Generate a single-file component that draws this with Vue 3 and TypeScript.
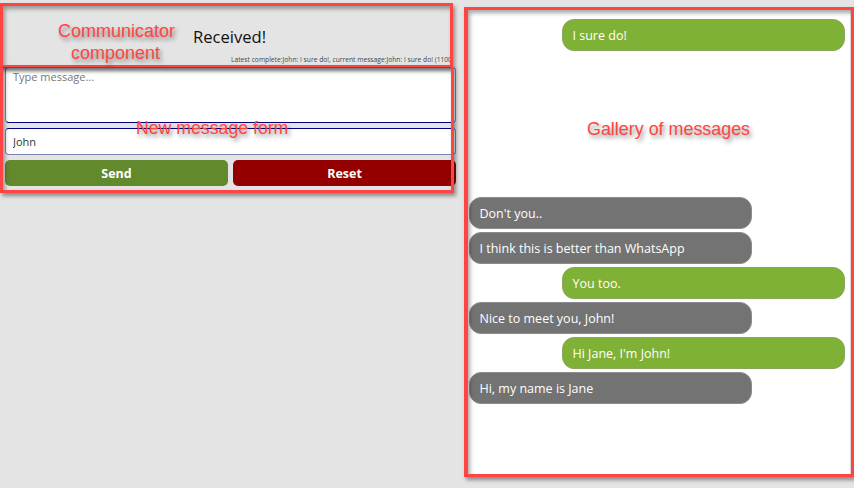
<script setup lang="ts">
interface Msg { text: string; mine: boolean }
const messages: Msg[] = [
  { text: "Don't you..", mine: false },
  { text: 'I think this is better than WhatsApp', mine: false },
  { text: 'You too.', mine: true },
  { text: 'Nice to meet you, John!', mine: false },
  { text: "Hi Jane, I'm John!", mine: true },
  { text: 'Hi, my name is Jane', mine: false },
]
</script>

<template>
  <div class="page">
    <section class="left">
      <div class="communicator">
        <div class="received">Received!</div>
        <div class="latest">Latest complete:John: I sure do!, current message:John: I sure do! (1100</div>
      </div>
      <form class="form" @submit.prevent>
        <textarea class="area" placeholder="Type message..."></textarea>
        <input class="name" value="John" />
        <div class="buttons">
          <button class="btn send" type="button">Send</button>
          <button class="btn reset" type="button">Reset</button>
        </div>
      </form>
    </section>
    <section class="gallery">
      <div class="bubble mine">I sure do!</div>
      <div class="spacer"></div>
      <div v-for="m in messages" :key="m.text" class="bubble" :class="{ mine: m.mine }">{{ m.text }}</div>
    </section>

    <div class="box box-a"></div>
    <div class="box box-b"></div>
    <div class="box box-c"></div>
    <div class="note note-a">Communicator<br />component</div>
    <div class="note note-b">New message form</div>
    <div class="note note-c">Gallery of messages</div>
  </div>
</template>

<style>
html, body { margin: 0; background: #e4e4e4; }
</style>

<style scoped>
.page {
  position: relative;
  width: 854px;
  height: 488px;
  overflow: hidden;
  display: flex;
  background: #e4e4e4;
  font-family: "Open Sans", sans-serif;
}
.left {
  width: 461px;
  padding-left: 5px;
  box-sizing: border-box;
  flex: none;
}
.communicator {
  height: 67px;
  position: relative;
  overflow: hidden;
  width: 445px;
}
.received {
  padding: 25px 0 0 188px;
  font-size: 16.6px;
  line-height: 24px;
  color: #111;
}
.latest {
  position: absolute;
  top: 55px;
  left: 226px;
  white-space: nowrap;
  font-size: 6.7px;
  line-height: 10px;
  color: #444;
}
.form {
  display: flex;
  flex-direction: column;
  width: 451px;
}
.area, .name {
  box-sizing: border-box;
  width: 100%;
  margin: 0;
  border: 1px solid #7c83b5;
  border-radius: 4px;
  background: #fff;
  font-family: "Open Sans", sans-serif;
  font-size: 11px;
  padding: 0 7px;
  outline: none;
  color: #333;
}
.area {
  height: 56px;
  padding-top: 1px;
  resize: none;
  display: block;
  border-bottom-color: #000080;
}
.area::placeholder { color: #777; opacity: 1; }
.name { height: 27px; margin-top: 5px; border-top-color: #000080; }
.buttons {
  display: flex;
  gap: 5px;
  margin-top: 5px;
}
.btn {
  flex: 1;
  height: 26px;
  border: 0;
  border-radius: 5px;
  color: #fff;
  font-family: "Open Sans", sans-serif;
  font-weight: 700;
  font-size: 12.5px;
  padding: 0;
}
.send { background: #63892d; }
.reset { background: #940000; }
.gallery {
  width: 383px;
  margin-top: 10px;
  height: 465px;
  flex: none;
  background: #fff;
  box-sizing: border-box;
  padding: 9px 5px 0 2px;
  margin-left: 6px;
  display: flex;
  flex-direction: column;
  gap: 3px;
}
.spacer { height: 140px; }
.bubble {
  box-sizing: border-box;
  width: 283px;
  height: 32px;
  flex: none;
  border-radius: 12px;
  padding: 0 9.5px;
  line-height: 32px;
  font-size: 12.5px;
  color: #fff;
  background: #737373;
  border: 1px solid #8c8c8c;
}
.bubble.mine {
  align-self: flex-end;
  background: #7fb137;
  border-color: #8aa85c;
}
.box {
  position: absolute;
  box-sizing: border-box;
  border: 3px solid #ff4444;
  box-shadow: 2px 3px 4px rgba(0, 0, 0, 0.4), inset 2px 3px 4px rgba(0, 0, 0, 0.35);
  pointer-events: none;
}
.box-a { left: 0; top: 3px; width: 453px; height: 65px; }
.box-b { left: 0; top: 67px; width: 454px; height: 126px; border-top: 0; }
.box-c { left: 464px; top: 7px; width: 390px; height: 470px; border-width: 3px 3px 3px 4px; }
.note {
  position: absolute;
  font-family: "Liberation Sans", Arial, sans-serif;
  font-size: 18px;
  line-height: 29px;
  color: #ff4444;
  text-align: center;
  white-space: nowrap;
  text-shadow: 2px 3px 4px rgba(0, 0, 0, 0.45);
}
.note-a { left: 58px; top: 20px; width: 115px; line-height: 22px; }
.note-b { left: 136px; top: 114px; font-size: 17.7px; }
.note-c { left: 587px; top: 115px; font-size: 17.9px; }
</style>
